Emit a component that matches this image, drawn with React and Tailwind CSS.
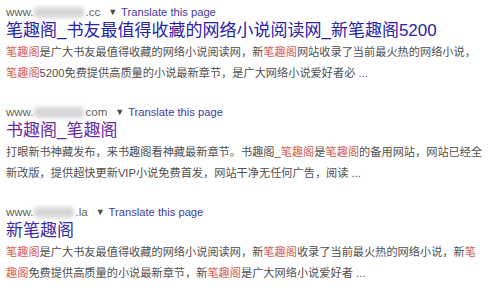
const results = [
  {
    domain: '.cc',
    blurW: 'w-[50px]',
    title: '笔趣阁_书友最值得收藏的网络小说阅读网_新笔趣阁5200',
    titleColor: 'text-[#2b22a8]',
    lines: [
      [['笔趣阁', true], ['是广大书友最值得收藏的网络小说阅读网，新', false], ['笔趣阁', true], ['网站收录了当前最火热的网络小说，', false]],
      [['笔趣阁', true], ['5200免费提供高质量的小说最新章节，是广大网络小说爱好者必 ...', false]],
    ],
  },
  {
    domain: 'com',
    blurW: 'w-[50px]',
    title: '书趣阁_笔趣阁',
    titleColor: 'text-[#6a2a9e]',
    lines: [
      [['打眼新书神藏发布，来书趣阁看神藏最新章节。书趣阁_', false], ['笔趣阁', true], ['是', false], ['笔趣阁', true], ['的备用网站，网站已经全', false]],
      [['新改版，提供超快更新VIP小说免费首发，网站干净无任何广告，阅读 ...', false]],
    ],
  },
  {
    domain: '.la',
    blurW: 'w-[40px]',
    title: '新笔趣阁',
    titleColor: 'text-[#362ca6]',
    lines: [
      [['笔趣阁', true], ['是广大书友最值得收藏的网络小说阅读网，新', false], ['笔趣阁', true], ['收录了当前最火热的网络小说，新', false], ['笔', true]],
      [['趣阁', true], ['免费提供高质量的小说最新章节，新', false], ['笔趣阁', true], ['是广大网络小说爱好者 ...', false]],
    ],
  },
];

const Result = ({ r }) => (
  <div className="mb-[20px]">
    {/* url row */}
    <div className="flex items-center h-[16px] text-[11.5px] leading-[16px] text-[#5f5f5f] whitespace-nowrap">
      <span>www.</span>
      <span className={`inline-block ${r.blurW} h-[11px] mx-[1px] rounded-sm bg-[#d6d6d6] blur-[2px]`} />
      <span>{r.domain}</span>
      <span className="ml-[8px] mr-[4px] text-[9px] text-[#4a4a4a]">▼</span>
      <span className="text-[11.2px] text-[#3f3aa0]">Translate this page</span>
    </div>
    {/* title */}
    <div className={`h-[22px] text-[17px] leading-[22px] whitespace-nowrap ${r.titleColor}`}>{r.title}</div>
    {/* snippet */}
    <div className="text-[11.2px] leading-[21px] text-[#505050] whitespace-nowrap">
      {r.lines.map((line, i) => (
        <div key={i}>
          {line.map(([t, em], j) => (
            <span key={j} className={em ? 'text-[#d25f57]' : ''}>
              {t}
            </span>
          ))}
        </div>
      ))}
    </div>
  </div>
);

const App = () => {
  return (
    <div
      className="w-[499px] h-[297px] overflow-hidden bg-white pl-[6px] pt-[4px]"
      style={{ fontFamily: '"Liberation Sans", "Noto Sans CJK SC", sans-serif' }}
    >
      {results.map((r, i) => (
        <Result key={i} r={r} />
      ))}
    </div>
  );
};

export default App;
